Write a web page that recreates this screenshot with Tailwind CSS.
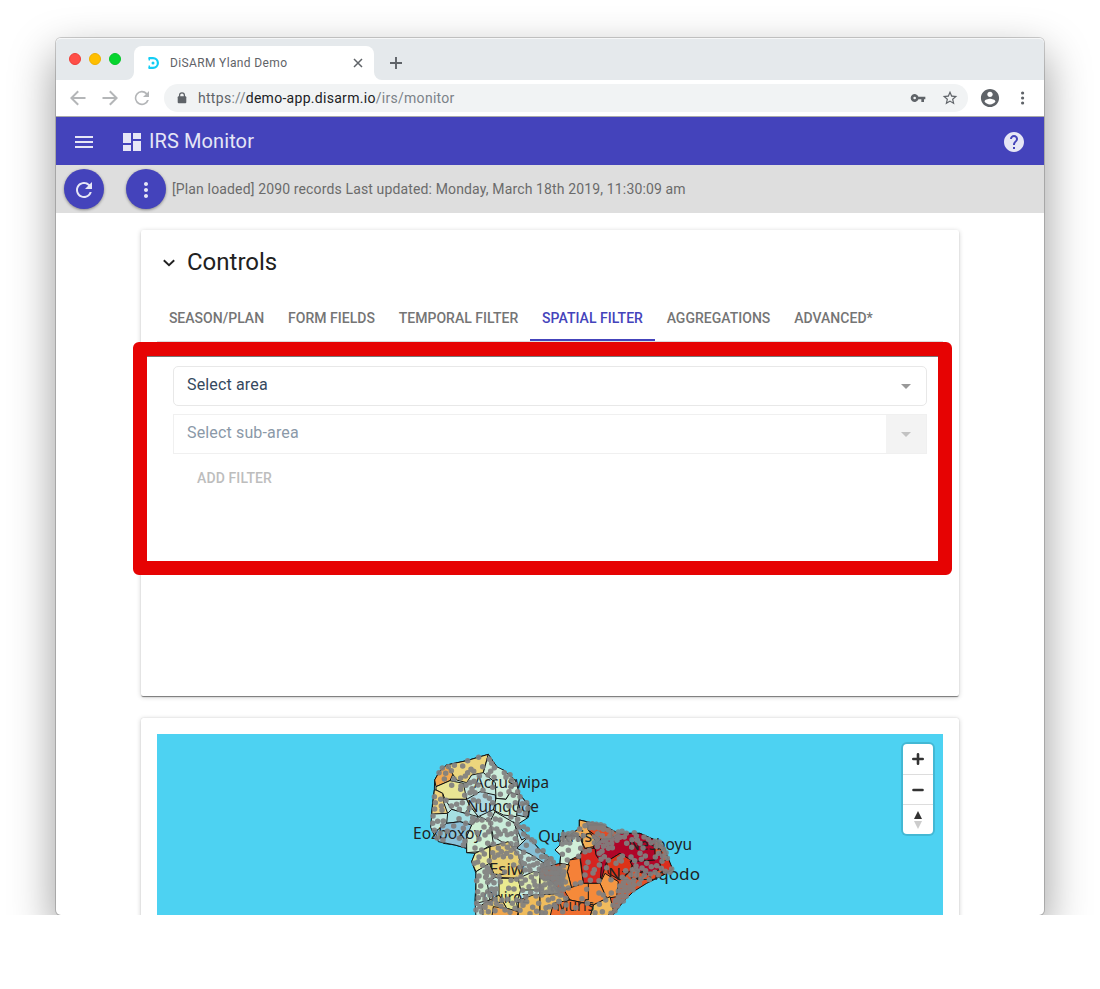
<!DOCTYPE html>
<html lang="en">
<head>
<meta charset="utf-8">
<title>DiSARM Yland Demo</title>
<script src="https://cdn.jsdelivr.net/npm/@tailwindcss/browser@4"></script>
</head>
<body class="bg-white font-['Roboto',sans-serif]">
<div class="h-[915px] w-[1100px] overflow-hidden px-14 pt-[38px]">
<div class="relative flex h-[877px] flex-col rounded-[5px] bg-white shadow-[0_0_0_1px_rgba(0,0,0,0.18),0_18px_44px_2px_rgba(0,0,0,0.38)]">

  <!-- tab strip -->
  <div class="flex h-[42px] shrink-0 items-end rounded-t-[5px] border-t border-[#f6f7f8] bg-[#e5e9ec]">
    <div class="flex h-full w-[78px] items-center gap-2 pb-[2px] pl-[13px]">
      <span class="size-3 rounded-full border border-[#ee3e38] bg-[#ff4f48]"></span>
      <span class="size-3 rounded-full border border-[#eeb000] bg-[#ffbf00]"></span>
      <span class="size-3 rounded-full border border-[#05c52a] bg-[#05d52e]"></span>
    </div>
    <div class="relative flex h-[34px] w-60 items-center rounded-t-lg bg-white pl-[14px] pr-[10px]">
      <svg class="absolute -left-2 bottom-0" width="8" height="8"><path d="M8 0v8H0a8 8 0 0 0 8-8" fill="#fff"/></svg>
      <svg class="absolute -right-2 bottom-0" width="8" height="8"><path d="M0 0v8h8a8 8 0 0 1-8-8" fill="#fff"/></svg>
      <svg width="12" height="14" viewBox="0 0 12 14" fill="none" stroke="#12cdf5" stroke-width="2.2"><path d="M.5 2.1h4.500a4.900 4.900 0 0 1 0 9.800H.5"/><path d="M1.300 2v2.500M1.300 9.500V12" stroke-width="1.400"/><circle cx="5" cy="7" r="1.500" fill="#12cdf5" stroke="none"/></svg>
      <span class="ml-[10px] flex-1 whitespace-nowrap text-[12px] tracking-[0.36px] text-[#5f6368]">DiSARM Yland Demo</span>
      <svg width="12" height="12" viewBox="0 0 12 12" stroke="#5f6368" stroke-width="1.5"><path d="M2 2l8 8M10 2l-8 8"/></svg>
    </div>
    <svg class="mb-[11px] ml-4" width="12" height="12" viewBox="0 0 12 12" stroke="#5f6368" stroke-width="1.9"><path d="M6 0v12M0 6h12"/></svg>
  </div>

  <!-- address bar -->
  <div class="flex h-[37px] shrink-0 items-center border-b border-[#a9a9a9] bg-white pl-[13px]">
    <svg width="18" height="18" viewBox="3 3 18 18" fill="#b4b6b8"><path d="M19.500 11H7.830l5.080-5.080L11.500 4.500 4 12l7.500 7.500 1.410-1.410L7.830 13H19.500z"/></svg>
    <svg class="ml-[14px]" width="18" height="18" viewBox="3 3 18 18" fill="#b4b6b8"><path d="M4.500 11h11.670l-5.080-5.080L12.500 4.500 20 12l-7.500 7.500-1.410-1.410L16.170 13H4.500z"/></svg>
    <svg class="ml-[14px]" width="18" height="18" viewBox="3 3 18 18" fill="#b4b6b8"><path d="M17.1 6.9A7.2 7.200 0 1 0 18.900 14h-1.900a5.500 5.500 0 1 1-1.200-5.800L13 11h6V5z"/></svg>
    <div class="ml-[13px] flex h-7 w-[804px] items-center rounded-full bg-[#f1f3f4] pl-[13px] pr-[10px]">
      <svg width="10" height="12" viewBox="0 0 10 12"><path d="M2.600 5V3.200a2.400 2.400 0 0 1 4.800 0V5" fill="none" stroke="#5f6368" stroke-width="1.300"/><rect x=".7" y="4.300" width="8.600" height="7" rx="1" fill="#5f6368"/></svg>
      <span class="ml-[11px] flex-1 text-[14px] tracking-[0.29px] text-[#7b8288]"><span class="text-[#5f6368]">https</span>://<span class="text-[#202124]">demo-app.disarm.io</span>/irs/monitor</span>
      <svg class="mb-px" width="16" height="16" viewBox="0 0 24 24" fill="#5f6368"><path d="M12.650 10A6 6 0 1 0 12.650 14H17v4h4v-4h2v-4H12.650zM7 14a2 2 0 1 1 0-4 2 2 0 0 1 0 4z"/></svg>
      <svg class="ml-4" width="16" height="16" viewBox="1 1 22 22" fill="#5f6368"><path d="M22 9.240l-7.190-.62L12 2 9.190 8.630 2 9.240l5.460 4.730L5.820 21 12 17.270 18.180 21l-1.630-7.030L22 9.240zM12 15.400l-3.760 2.270 1-4.280-3.320-2.880 4.380-.38L12 6.100l1.710 4.040 4.380.38-3.320 2.880 1 4.280L12 15.400z"/></svg>
    </div>
    <svg class="ml-3" width="20" height="20" viewBox="1 1 22 22" fill="#5f6368"><path d="M12 2C6.480 2 2 6.480 2 12s4.480 10 10 10 10-4.480 10-10S17.520 2 12 2zm0 3c1.660 0 3 1.340 3 3s-1.340 3-3 3-3-1.340-3-3 1.340-3 3-3zm0 14.200c-2.500 0-4.710-1.280-6-3.220.03-1.990 4-3.080 6-3.080 1.990 0 5.970 1.090 6 3.080-1.290 1.940-3.500 3.220-6 3.220z"/></svg>
    <svg class="ml-5" width="5" height="14" viewBox="0 0 5 14" fill="#5f6368"><circle cx="2.600" cy="2" r="1.600"/><circle cx="2.600" cy="7" r="1.600"/><circle cx="2.600" cy="12" r="1.600"/></svg>
  </div>

  <!-- app bar -->
  <div class="flex h-12 shrink-0 items-center bg-[#4443bb] pl-4 pr-[18px] text-[#e6e6f6]">
    <svg class="mt-[2px]" width="24" height="24" viewBox="0 0 24 24" fill="currentColor"><path d="M3 18h18v-2H3v2zm0-5h18v-2H3v2zm0-7v2h18V6H3z"/></svg>
    <svg class="ml-6 mt-[2px]" width="24" height="24" viewBox="0 0 24 24" fill="currentColor"><path d="M3 13h8V3H3v10zm0 8h8v-6H3v6zm10 0h8V11h-8v10zm0-18v6h8V3h-8z"/></svg>
    <span class="ml-[5px] flex-1 text-[20px] tracking-[0.1px]">IRS Monitor</span>
    <svg class="mt-[2px]" width="24" height="24" viewBox="0 0 24 24" fill="currentColor"><path d="M12 2C6.480 2 2 6.480 2 12s4.480 10 10 10 10-4.480 10-10S17.520 2 12 2zm1 17h-2v-2h2v2zm2.070-7.750l-.9.92C13.450 12.900 13 13.500 13 15h-2v-.5c0-1.100.45-2.100 1.170-2.830l1.240-1.260c.37-.36.59-.86.59-1.410 0-1.100-.9-2-2-2s-2 .9-2 2H8c0-2.210 1.790-4 4-4s4 1.790 4 4c0 .88-.36 1.680-.93 2.250z"/></svg>
  </div>

  <!-- status bar -->
  <div class="flex h-12 shrink-0 items-center bg-[#dedede] pl-2">
    <span class="flex size-10 items-center justify-center rounded-full bg-[#4443bb] shadow-[0_1px_3px_rgba(0,0,0,0.4)]"><svg class="mt-[2px]" width="24" height="24" viewBox="0 0 24 24" fill="#e6e6f6"><path d="M17.650 6.350A7.958 7.958 0 0 0 12 4c-4.420 0-7.990 3.580-7.990 8s3.570 8 7.990 8c3.730 0 6.840-2.550 7.730-6h-2.080A5.990 5.990 0 0 1 12 18c-3.310 0-6-2.690-6-6s2.690-6 6-6c1.660 0 3.140.69 4.220 1.780L13 11h7V4l-2.350 2.350z"/></svg></span>
    <span class="ml-[22px] flex size-10 items-center justify-center rounded-full bg-[#4443bb] shadow-[0_1px_3px_rgba(0,0,0,0.4)]"><svg class="mt-[2px]" width="24" height="24" viewBox="0 0 24 24" fill="#e6e6f6"><path d="M12 8c1.100 0 2-.9 2-2s-.9-2-2-2-2 .9-2 2 .9 2 2 2zm0 2c-1.100 0-2 .9-2 2s.9 2 2 2 2-.9 2-2-.9-2-2-2zm0 6c-1.100 0-2 .9-2 2s.9 2 2 2 2-.9 2-2-.9-2-2-2z"/></svg></span>
    <span class="ml-[6px] whitespace-nowrap text-[14px] tracking-[0.14px] text-[#6b6b6b]">[Plan loaded] 2090 records Last updated: Monday, March 18th 2019, 11:30:09 am</span>
  </div>

  <!-- page content -->
  <div class="flex flex-1 flex-col gap-[22px] overflow-hidden rounded-b-[5px] px-[85px] pt-[17px]">
    <section class="relative h-[466px] shrink-0 rounded-[2px] bg-white px-4 pt-4 shadow-[0_2px_1px_-1px_rgba(0,0,0,0.3),0_1px_1px_0_rgba(0,0,0,0.24),0_1px_5px_0_rgba(0,0,0,0.2)]">
      <div class="flex h-8 items-center pl-[6px]">
        <svg class="mt-[2px]" width="12" height="8" viewBox="0 0 12 8" fill="none" stroke="#212121" stroke-width="1.900"><path d="M.8 1.200l5.200 5 5.200-5"/></svg>
        <span class="ml-3 text-[24px] text-[#212121]">Controls</span>
      </div>
      <div class="mt-4 flex h-12 border-b border-[#dcdcdc] text-[14px] font-medium tracking-[0.02px] text-[#757575]">
        <span class="flex w-[119px] items-center justify-center pt-[2px]">SEASON/PLAN</span>
        <span class="flex w-[111px] items-center justify-center pt-[2px]">FORM FIELDS</span>
        <span class="flex w-[143px] items-center justify-center pt-[2px]">TEMPORAL FILTER</span>
        <span class="flex w-[125px] items-center justify-center border-b-2 border-[#4443bb] pt-1 text-[#4443bb]">SPATIAL FILTER</span>
        <span class="flex w-[127px] items-center justify-center pt-[2px]">AGGREGATIONS</span>
        <span class="flex w-[103px] items-center justify-center pt-[2px]">ADVANCED*</span>
      </div>
      <div class="flex flex-col px-4 pt-6">
        <div class="flex h-10 items-center justify-between rounded-[5px] border border-[#e8e8e8] pl-[13px] pr-[15px] text-[16px] tracking-[0.15px] text-[#35495e]">
          <span class="-mt-[2px]">Select area</span>
          <svg width="10" height="5"><path d="M0 0h10L5 5z" fill="#999"/></svg>
        </div>
        <div class="mt-2 flex h-10 items-center justify-between border border-[#f0f0f0] pl-[13px] text-[16px] tracking-[0.15px] text-[#8b99a8]">
          <span class="-mt-[2px]">Select sub-area</span>
          <span class="flex h-full w-10 items-center justify-center bg-[#f3f3f3]"><svg width="10" height="5"><path d="M0 0h10L5 5z" fill="#c2c2c2"/></svg></span>
        </div>
        <span class="ml-6 mt-[14px] text-[14px] font-medium leading-5 tracking-[0.12px] text-[#bdbdbd]">ADD FILTER</span>
      </div>
      <!-- highlight frame over the filter area -->
      <div class="absolute -left-2 top-28 h-[233px] w-[819px] rounded-[6px] border-[14px] border-[#e60303]"><div class="h-px bg-[#777]"></div></div>
    </section>

    <section class="h-[400px] shrink-0 rounded-[2px] bg-white p-4 shadow-[0_0_1px_rgba(0,0,0,0.2),0_1px_5px_0_rgba(0,0,0,0.22)]">
      <div class="relative h-[350px] bg-[#4dd2f2]">
        <svg class="block" width="786" height="181" viewBox="157 734 786 181">
          <!-- west side of the island -->
          <g transform="translate(400 740) scale(.33333)" stroke="#111" stroke-width="3" stroke-linejoin="round">
            <path fill="#c4e8df" d="M265 43L200 62 140 75 118 95 104 120 103 150 97 195 95 225 92 262 105 290 130 310 165 315 200 325 200 338 225 340 215 365 228 400 228 430 225 480 228 535H500V390L465 380 450 355 420 330 385 290 350 255 385 232 390 200 360 165 345 120 310 90 302 105 290 80z"/>
            <path fill="#f2a950" d="M118 95L140 75 160 100 150 122 108 140 104 120z"/>
            <path fill="#ecd67d" d="M140 75L200 62 265 43 250 98 215 105 200 128 170 120z"/>
            <path fill="#e9e594" d="M108 140L150 122 190 130 200 178 135 178 128 160 108 150z"/>
            <path fill="#efd37e" d="M103 150L108 150 128 160 132 190 143 220 95 222z"/>
            <path fill="#cdeedb" d="M265 43L290 80 310 90 345 120 360 165 330 158 318 178 288 175 286 128 250 98z"/>
            <path fill="#c5eadf" d="M135 178L200 178 210 198 195 220 155 208z"/>
            <path fill="#add9e2" d="M200 178L240 155 286 165 288 205 235 230 210 198z"/>
            <path fill="#cbeed9" d="M288 175L318 178 330 158 360 165 350 230 310 225 280 210z"/>
            <path fill="#9ccbdd" d="M360 165L390 200 382 232 350 225z"/>
            <path fill="#a6dfe3" d="M143 220L155 208 195 220 235 230 215 255 180 245 140 250z"/>
            <path fill="#8bc2da" d="M105 275L140 250 180 245 215 255 200 325 165 315 115 305z"/>
            <path fill="#cfefd5" d="M215 255L240 230 270 245 280 310 240 335 200 338 200 290z"/>
            <path fill="#c9ecda" d="M270 245L285 215 345 250 357 320 330 320 280 290z"/>
            <path fill="#86bfd5" d="M340 245L350 255 385 290 365 300zM350 325L385 290 420 330 450 355 430 368 390 342z"/>
            <path fill="#8fc5d9" d="M430 368L450 355 465 380 500 390 480 400 430 390z"/>
            <path fill="#e7e99c" d="M225 340L270 320 270 370 228 395 215 365z"/>
            <path fill="#e9cf72" d="M270 320L325 305 355 345 370 400 355 415 285 412 270 370z"/>
            <path fill="#cdeed2" d="M228 395L268 370 285 412 262 430 270 480 228 490z"/>
            <path fill="#e9e990" d="M297 415H355L362 450 350 490 355 515 320 505 297 465z"/>
            <path fill="#ddebb0" d="M355 415L400 395 440 400 430 450 362 450z"/>
            <path fill="#eac86f" d="M245 495L270 480 297 465 320 505 300 535H250z"/>
            <path fill="#f0a64d" d="M280 500L320 505 355 515 350 535H275z"/>
            <path fill="#efbb5b" d="M355 480L400 465 500 460V500L440 490 430 535H355z"/>
            <path fill="#f47a35" d="M440 490L500 485V535H430z"/>
          </g>
          <!-- east side of the island -->
          <g transform="translate(540 800) scale(.33333)" stroke="#111" stroke-width="3" stroke-linejoin="round">
            <path fill="#e45026" d="M118 60L140 65 190 75 235 100 300 100 345 120 375 145 385 180 398 208 370 225 320 250 280 275 250 305 215 350H0V205L60 190 62 165 45 150 60 135 62 110 90 105 118 85z"/>
            <path fill="#f2af55" d="M118 60L140 65 145 90 168 125 160 140 135 145 120 110 90 105 118 85z"/>
            <path fill="#d1f0d9" d="M62 110L120 110 130 140 120 165 90 180 88 195 60 190 62 165 45 150 60 135z"/>
            <path fill="#e34b24" d="M145 75L190 75 215 92 215 115 180 118 145 90z"/>
            <path fill="#b00428" d="M160 140L180 120 215 115 235 100 300 100 345 120 345 180 300 190 270 185 240 160 200 185 180 250 165 165z"/>
            <path fill="#d6241f" d="M120 165L135 145 165 145 168 165 185 190 180 250 130 250z"/>
            <path fill="#dd3318" d="M200 185L240 160 280 185 270 215 240 240 205 220z"/>
            <path fill="#b20428" d="M270 185L345 180 365 150 368 205 320 225 285 210z"/>
            <path fill="#dc2d1d" d="M360 190L385 175 398 208 370 225z"/>
            <path fill="#f58138" d="M88 180L120 175 130 250 95 265 82 215z"/>
            <path fill="#eeae52" d="M60 190L88 195 82 215 95 265 72 270 60 245z"/>
            <path fill="#f59743" d="M180 250L195 220 235 245 230 290 200 295z"/>
            <path fill="#f58a3a" d="M72 270L130 250 180 250 200 295 160 315 90 300zM145 250V300"/>
            <path fill="#f0bc5d" d="M0 285L55 280 90 300 60 350H0zM160 315L210 290 220 330 200 350H150z"/>
            <path fill="#f06f30" d="M40 310L90 300 160 315 150 350H30z"/>
            <path fill="#e3e9a0" d="M0 235L30 240 55 265 55 280 0 285z"/>
          </g>
          <g class="font-['Noto_Sans',sans-serif]" font-size="15.500" fill="#222">
            <text x="474" y="788" textLength="75" lengthAdjust="spacingAndGlyphs">Accuswipa</text>
            <text x="467" y="812" textLength="72" lengthAdjust="spacingAndGlyphs">Numqoqe</text>
            <text x="413" y="839" textLength="69" lengthAdjust="spacingAndGlyphs">Eozboxoy</text>
            <text x="489" y="875" textLength="35" lengthAdjust="spacingAndGlyphs">Esiw</text>
            <text x="483" y="903" textLength="46" lengthAdjust="spacingAndGlyphs">Quiroz</text>
            <text x="538" y="842" textLength="54" lengthAdjust="spacingAndGlyphs">Quknis</text>
            <text x="628" y="850" textLength="64" lengthAdjust="spacingAndGlyphs">Nesboyu</text>
            <text x="608" y="880" textLength="92" lengthAdjust="spacingAndGlyphs">Nzuzuqodo</text>
            <text x="556" y="911" textLength="38" lengthAdjust="spacingAndGlyphs">Murfs</text>
          </g>
          <!-- survey points: short round-capped segments -->
          <g fill="none" stroke="#808080" stroke-opacity=".93" stroke-width="16.500" stroke-linecap="round">
            <path transform="translate(400 740) scale(.33333)" d="M117 98h.1M127 84h.1M145 80h.1M163 76h.1M188 78h.1M203 62h.1M213 88h.1M203 98h.1M221 94h.1M236 52h.1M248 80h.1M154 92h.1M137 100h.1M133 117h.1M155 136h.1M162 117h.1M182 114h.1M196 108h.1M183 138h.1M182 148h.1M194 166h.1M210 128h.1M198 136h.1M216 146h.1M222 124h.1M238 108h.1M234 135h.1M249 151h.1M225 158h.1M210 158h.1M268 58h.1M275 70h.1M283 83h.1M272 94h.1M264 105h.1M282 112h.1M313 98h.1M330 104h.1M318 112h.1M335 120h.1M278 142h.1M333 140h.1M345 133h.1M353 155h.1M360 170h.1M340 166h.1M327 155h.1M301 163h.1M327 198h.1M346 188h.1M367 191h.1M380 188h.1M384 205h.1M376 221h.1M358 212h.1M333 231h.1M353 238h.1M103 170h.1M122 178h.1M138 181h.1M106 188h.1M124 198h.1M104 207h.1M126 211h.1M99 228h.1M113 244h.1M130 243h.1M98 250h.1M128 257h.1M103 271h.1M120 280h.1M111 294h.1M129 300h.1M154 198h.1M170 193h.1M187 188h.1M178 208h.1M208 204h.1M177 236h.1M202 221h.1M218 234h.1M197 250h.1M216 247h.1M230 240h.1M246 240h.1M265 239h.1M272 250h.1M286 237h.1M300 240h.1M270 223h.1M235 184h.1M268 175h.1M278 188h.1M256 167h.1M220 180h.1M161 258h.1M142 274h.1M190 265h.1M178 295h.1M195 303h.1M190 315h.1M232 278h.1M252 261h.1M255 285h.1M237 297h.1M225 324h.1M266 275h.1M274 266h.1M295 275h.1M290 267h.1M301 282h.1M315 272h.1M322 284h.1M288 290h.1M334 281h.1M346 296h.1M348 275h.1M325 252h.1M350 251h.1M357 261h.1M371 260h.1M382 268h.1M371 282h.1M382 291h.1M395 299h.1M403 305h.1M379 316h.1M333 311h.1M350 313h.1M263 310h.1M280 312h.1M309 311h.1M322 322h.1M295 324h.1M245 330h.1M253 342h.1M237 351h.1M233 366h.1M248 376h.1M223 370h.1M237 408h.1M230 422h.1M242 438h.1M233 455h.1M235 473h.1M249 464h.1M230 490h.1M240 500h.1M228 510h.1M245 516h.1M255 395h.1M262 383h.1M259 407h.1M272 420h.1M263 427h.1M257 412h.1M280 407h.1M270 395h.1M282 428h.1M268 362h.1M283 352h.1M278 338h.1M294 345h.1M304 335h.1M310 350h.1M320 340h.1M332 350h.1M333 331h.1M342 325h.1M350 339h.1M362 350h.1M371 337h.1M363 365h.1M341 375h.1M360 381h.1M373 371h.1M388 378h.1M386 358h.1M375 390h.1M400 375h.1M401 355h.1M412 370h.1M425 350h.1M429 332h.1M413 332h.1M437 350h.1M452 357h.1M444 371h.1M428 375h.1M418 387h.1M437 389h.1M450 384h.1M462 386h.1M471 395h.1M480 389h.1M459 399h.1M443 403h.1M426 405h.1M435 417h.1M451 414h.1M464 412h.1M477 408h.1M490 405h.1M485 420h.1M472 425h.1M457 427h.1M447 430h.1M465 438h.1M484 435h.1M472 447h.1M490 449h.1M450 445h.1M434 434h.1M420 438h.1M405 435h.1M387 440h.1M376 420h.1M394 411h.1M408 401h.1M390 391h.1M363 410h.1M350 418h.1M365 430h.1M402 424h.1M410 450h.1M425 453h.1M440 457h.1M455 456h.1M470 460h.1M485 465h.1M408 468h.1M392 458h.1M378 470h.1M368 451h.1M342 447h.1M326 445h.1M333 421h.1M301 425h.1M297 410h.1M314 396h.1M289 447h.1M275 447h.1M284 460h.1M306 480h.1M285 478h.1M270 466h.1M263 455h.1M255 478h.1M258 490h.1M272 489h.1M290 491h.1M303 499h.1M323 478h.1M337 490h.1M350 480h.1M365 484h.1M380 485h.1M398 502h.1M416 490h.1M445 480h.1M477 484h.1M255 502h.1M265 515h.1M285 512h.1M315 510h.1M330 517h.1M345 505h.1M360 511h.1M369 496h.1M390 521h.1M410 514h.1M436 518h.1M448 500h.1M463 495h.1"/>
            <path transform="translate(540 800) scale(.33333)" d="M70 103h.1M85 101h.1M98 98h.1M110 104h.1M68 116h.1M85 115h.1M98 112h.1M78 127h.1M66 132h.1M89 129h.1M115 118h.1M130 107h.1M119 87h.1M135 77h.1M145 72h.1M157 71h.1M169 73h.1M182 74h.1M192 78h.1M150 83h.1M162 84h.1M177 84h.1M190 88h.1M205 90h.1M215 97h.1M210 107h.1M187 107h.1M173 101h.1M163 111h.1M172 116h.1M163 128h.1M177 128h.1M190 122h.1M200 116h.1M215 117h.1M228 108h.1M235 96h.1M246 94h.1M259 100h.1M253 111h.1M240 112h.1M231 121h.1M215 130h.1M202 131h.1M217 143h.1M190 139h.1M205 145h.1M172 140h.1M283 98h.1M289 108h.1M276 119h.1M292 121h.1M300 130h.1M312 111h.1M325 118h.1M333 128h.1M345 124h.1M358 126h.1M349 139h.1M363 138h.1M371 148h.1M378 158h.1M382 175h.1M368 169h.1M356 160h.1M346 171h.1M366 184h.1M395 207h.1M390 217h.1M376 214h.1M364 205h.1M350 197h.1M334 200h.1M320 190h.1M304 178h.1M316 168h.1M300 160h.1M309 144h.1M275 142h.1M260 130h.1M67 163h.1M85 151h.1M82 180h.1M116 169h.1M122 145h.1M135 155h.1M148 151h.1M178 160h.1M186 154h.1M183 178h.1M193 170h.1M205 181h.1M178 195h.1M144 187h.1M138 203h.1M163 209h.1M159 219h.1M135 225h.1M151 241h.1M177 242h.1M200 203h.1M228 190h.1M238 177h.1M247 168h.1M244 183h.1M273 171h.1M284 182h.1M288 198h.1M277 209h.1M292 212h.1M306 204h.1M317 212h.1M331 222h.1M345 217h.1M355 225h.1M328 239h.1M313 226h.1M303 237h.1M290 225h.1M281 241h.1M273 224h.1M257 212h.1M247 232h.1M258 239h.1M267 246h.1M250 248h.1M239 258h.1M254 261h.1M269 260h.1M282 255h.1M298 251h.1M279 270h.1M263 274h.1M248 273h.1M235 273h.1M247 287h.1M259 289h.1M235 291h.1M226 302h.1M240 304h.1M250 303h.1M233 318h.1M219 316h.1M225 332h.1M213 340h.1M214 279h.1M213 239h.1M190 285h.1M177 279h.1M140 268h.1M122 248h.1M106 252h.1M126 296h.1M77 295h.1M142 310h.1M178 313h.1M197 300h.1M187 335h.1M165 338h.1M107 323h.1M78 315h.1M68 335h.1M20 185h.1M33 176h.1M40 187h.1M10 201h.1M25 200h.1M42 203h.1M57 205h.1M70 198h.1M5 215h.1M18 216h.1M33 218h.1M47 220h.1M62 218h.1M72 215h.1M7 231h.1M22 235h.1M39 235h.1M54 235h.1M68 234h.1M31 251h.1M48 251h.1M62 249h.1M76 246h.1M5 265h.1M40 267h.1M56 270h.1M70 266h.1M60 285h.1M5 285h.1M38 295h.1M18 323h.1M47 322h.1M57 305h.1M5 338h.1M85 264h.1"/>
          </g>
        </svg>
        <!-- zoom and compass buttons -->
        <div class="absolute right-[10px] top-[10px] flex h-[90px] w-[30px] flex-col divide-y divide-[#ddd] rounded-[4px] bg-white shadow-[0_0_0_2px_rgba(0,0,0,0.12)]">
          <span class="flex h-[31px] items-center justify-center"><svg width="12" height="12" viewBox="0 0 12 12" stroke="#333" stroke-width="2.600" stroke-linecap="round"><path d="M6 1.300v9.400M1.300 6h9.400"/></svg></span>
          <span class="flex h-[30px] items-center justify-center"><svg width="12" height="12" viewBox="0 0 12 12" stroke="#333" stroke-width="2.600" stroke-linecap="round"><path d="M1.500 6h9"/></svg></span>
          <span class="flex h-[29px] items-center justify-center"><svg width="8" height="18" viewBox="0 0 8 18"><path d="M4 0l4 8H0z" fill="#333"/><path d="M4 18l4-8H0z" fill="#ccc"/></svg></span>
        </div>
      </div>
    </section>
  </div>
</div>
</div>
</body>
</html>
